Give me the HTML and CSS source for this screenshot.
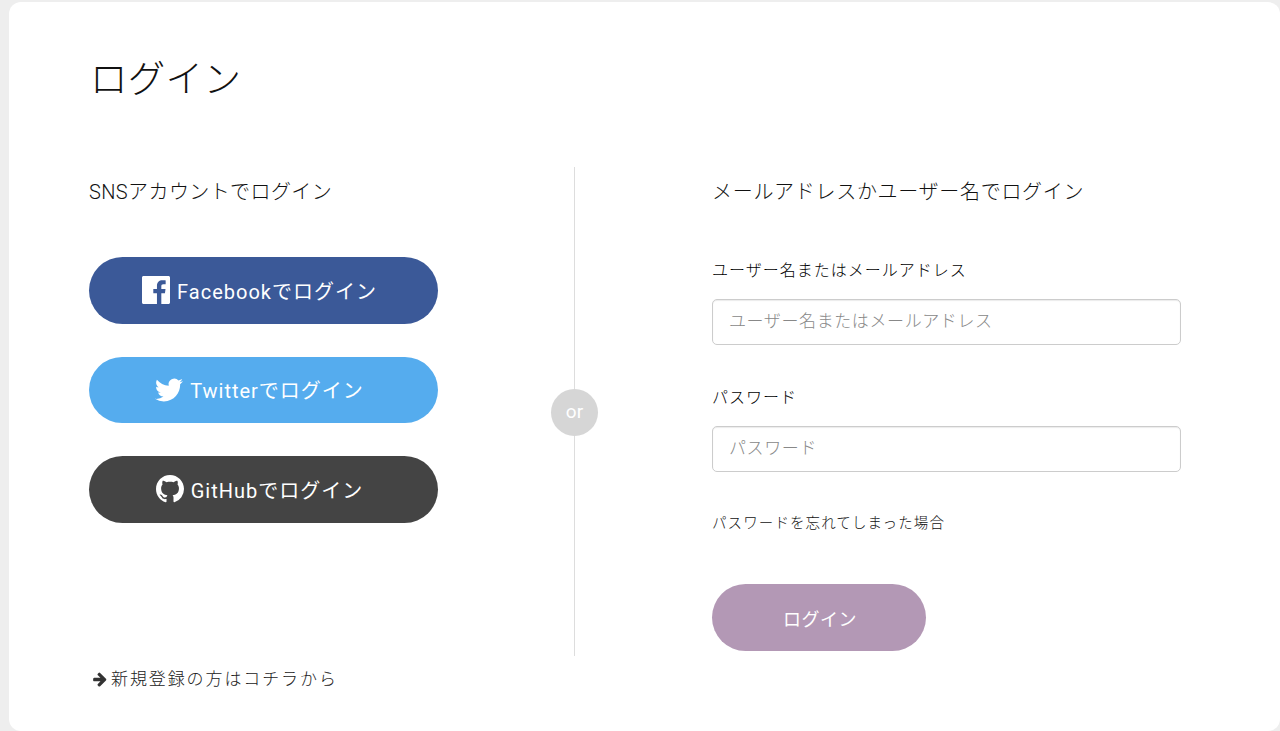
FILE: index.html
```html
<!DOCTYPE html>
<html lang="ja">
<head>
    <meta charset="UTF-8">
    <title>ログイン</title>
    <link rel="stylesheet" href="styles.css">
</head>
<body>
<main class="card">
    <h1 class="title">ログイン</h1>
    <div class="columns">
        <section class="col-sns">
            <h2 class="col-title">SNSアカウントでログイン</h2>
            <a class="btn btn-facebook" href="#">
                <svg class="btn-icon" viewBox="0 0 24 24"><path d="M22.675 0H1.325C.593 0 0 .593 0 1.325v21.351C0 23.407.593 24 1.325 24H12.82v-9.294H9.692v-3.622h3.128V8.413c0-3.1 1.893-4.788 4.659-4.788 1.325 0 2.463.099 2.795.143v3.24l-1.918.001c-1.504 0-1.795.715-1.795 1.763v2.313h3.587l-.467 3.622h-3.12V24h6.116c.73 0 1.323-.593 1.323-1.324V1.325C24 .593 23.407 0 22.675 0z"/></svg>
                Facebookでログイン
            </a>
            <a class="btn btn-twitter" href="#">
                <svg class="btn-icon" viewBox="0 0 24 24"><path d="M23.953 4.57a10 10 0 01-2.825.775 4.958 4.958 0 002.163-2.723c-.951.555-2.005.959-3.127 1.184a4.92 4.92 0 00-8.384 4.482C7.69 8.095 4.067 6.13 1.64 3.162a4.822 4.822 0 00-.666 2.475c0 1.71.87 3.213 2.188 4.096a4.904 4.904 0 01-2.228-.616v.06a4.923 4.923 0 003.946 4.827 4.996 4.996 0 01-2.212.085 4.936 4.936 0 004.604 3.417 9.867 9.867 0 01-6.102 2.105c-.39 0-.779-.023-1.17-.067a13.995 13.995 0 007.557 2.209c9.053 0 13.998-7.496 13.998-13.985 0-.21 0-.42-.015-.63A9.935 9.935 0 0024 4.59z"/></svg>
                Twitterでログイン
            </a>
            <a class="btn btn-github" href="#">
                <svg class="btn-icon" viewBox="0 0 16 16"><path d="M8 0C3.58 0 0 3.58 0 8c0 3.54 2.29 6.53 5.47 7.59.4.07.55-.17.55-.38 0-.19-.01-.82-.01-1.49-2.01.37-2.53-.49-2.69-.94-.09-.23-.48-.94-.82-1.13-.28-.15-.68-.52-.01-.53.63-.01 1.08.58 1.23.82.72 1.21 1.87.87 2.33.66.07-.52.28-.87.51-1.07-1.78-.2-3.64-.89-3.64-3.95 0-.87.31-1.59.82-2.15-.08-.2-.36-1.02.08-2.12 0 0 .67-.21 2.2.82.64-.18 1.32-.27 2-.27.68 0 1.36.09 2 .27 1.53-1.04 2.2-.82 2.2-.82.44 1.1.16 1.92.08 2.12.51.56.82 1.27.82 2.15 0 3.07-1.87 3.75-3.65 3.95.29.25.54.73.54 1.48 0 1.07-.01 1.93-.01 2.2 0 .21.15.46.55.38A8.013 8.013 0 0016 8c0-4.42-3.58-8-8-8z"/></svg>
                GitHubでログイン
            </a>
            <span class="or">or</span>
        </section>
        <form class="col-mail">
            <h2 class="col-title">メールアドレスかユーザー名でログイン</h2>
            <label class="field-label" for="user">ユーザー名またはメールアドレス</label>
            <input class="field" id="user" type="text" placeholder="ユーザー名またはメールアドレス">
            <label class="field-label" for="pass">パスワード</label>
            <input class="field" id="pass" type="text" placeholder="パスワード">
            <a class="forgot" href="#">パスワードを忘れてしまった場合</a>
            <button class="btn btn-login" type="button">ログイン</button>
        </form>
    </div>
    <a class="signup" href="#">
        <svg class="signup-icon" viewBox="0 0 1792 1792"><path d="M1600 960q0 54-37 91l-651 651q-39 37-91 37-51 0-90-37l-75-75q-38-38-38-91t38-91l293-293h-704q-52 0-84.5-37.5t-32.5-90.5v-128q0-53 32.5-90.5t84.5-37.5h704l-293-294q-38-36-38-90t38-90l75-75q38-38 90-38 53 0 91 38l651 651q37 35 37 90z"/></svg>
        新規登録の方はコチラから
    </a>
</main>
</body>
</html>
```

FILE: styles.css
```css
html, body {
    height: 100%;
}
body {
    margin: 0;
    overflow: hidden;
    background-color: #eeeeee;
    font-family: Roboto, "Noto Sans CJK JP", sans-serif;
    color: #333;
}
a {
    color: inherit;
    text-decoration: none;
}
.card {
    box-sizing: border-box;
    height: 729px;
    margin: 2px 0 0 9px;
    padding: 0 0 0 80px;
    background-color: #fff;
    border-radius: 12px;
}
.title {
    margin: 0;
    padding: 47px 0 0 1px;
    height: 118px;
    box-sizing: border-box;
    font-size: 37.5px;
    line-height: 60px;
    font-weight: 300;
    letter-spacing: .3px;
    color: #111;
}
.columns {
    display: flex;
    margin-top: 47px;
    height: 489px;
}
.col-sns {
    position: relative;
    width: 485px;
    border-right: 1px solid #ddd;
    display: flex;
    flex-direction: column;
    align-items: flex-start;
}
.col-mail {
    display: flex;
    flex-direction: column;
    align-items: flex-start;
    margin-left: 137px;
}
.col-title {
    margin: 0 0 40px;
    font-size: 20px;
    line-height: 50px;
    font-weight: 300;
    letter-spacing: .7px;
    color: #111;
}
.col-sns .col-title {
    letter-spacing: .4px;
}
.btn {
    display: flex;
    align-items: center;
    justify-content: center;
    gap: 7px;
    box-sizing: border-box;
    width: 349px;
    height: 66.5px;
    margin-bottom: 33px;
    padding-right: 8px;
    border: 0;
    border-radius: 34px;
    font-family: inherit;
    font-size: 20px;
    font-weight: 400;
    letter-spacing: .05em;
    color: #fff;
}
.btn-icon {
    width: 28px;
    height: 28px;
    fill: #fff;
}
.btn-facebook {
    background-color: #3b5998;
}
.btn-twitter {
    background-color: #55acee;
}
.btn-github {
    background-color: #444;
}
.or {
    position: absolute;
    top: 222px;
    right: -24px;
    width: 47px;
    height: 47px;
    border-radius: 50%;
    background-color: #d6d6d6;
    color: #fff;
    font-size: 19px;
    line-height: 45px;
    text-align: center;
}
.field-label {
    margin-bottom: 16px;
    font-size: 16px;
    line-height: 24px;
    font-weight: 300;
    letter-spacing: 1px;
    color: #000;
}
.col-title + .field-label {
    margin-top: 2px;
}
.field {
    box-sizing: border-box;
    width: 469px;
    height: 46px;
    margin-bottom: 41px;
    padding: 0 16px 2px;
    border: 1px solid #ccc;
    border-radius: 5px;
    box-shadow: inset 0 1px 1px rgba(0,0,0,.08);
    font-family: inherit;
    font-size: 17px;
    font-weight: 300;
    letter-spacing: .6px;
}
.field::placeholder {
    color: #888;
}
.forgot {
    margin: -1px 0 48px;
    font-size: 14.5px;
    line-height: 24px;
    letter-spacing: 1.1px;
    color: #111;
    font-weight: 300;
}
.btn-login {
    width: 214px;
    height: 67px;
    margin: 0;
    padding-right: 4px;
    background-color: #b398b5;
    font-size: 18px;
    font-weight: 400;
    letter-spacing: .03em;
}
.signup {
    display: flex;
    align-items: center;
    gap: 3px;
    margin: 11px 0 0 3px;
    font-size: 17px;
    line-height: 24px;
    font-weight: 300;
    letter-spacing: 1.9px;
    color: #222;
}
.signup-icon {
    width: 16px;
    height: 16px;
    fill: #333;
}
```
